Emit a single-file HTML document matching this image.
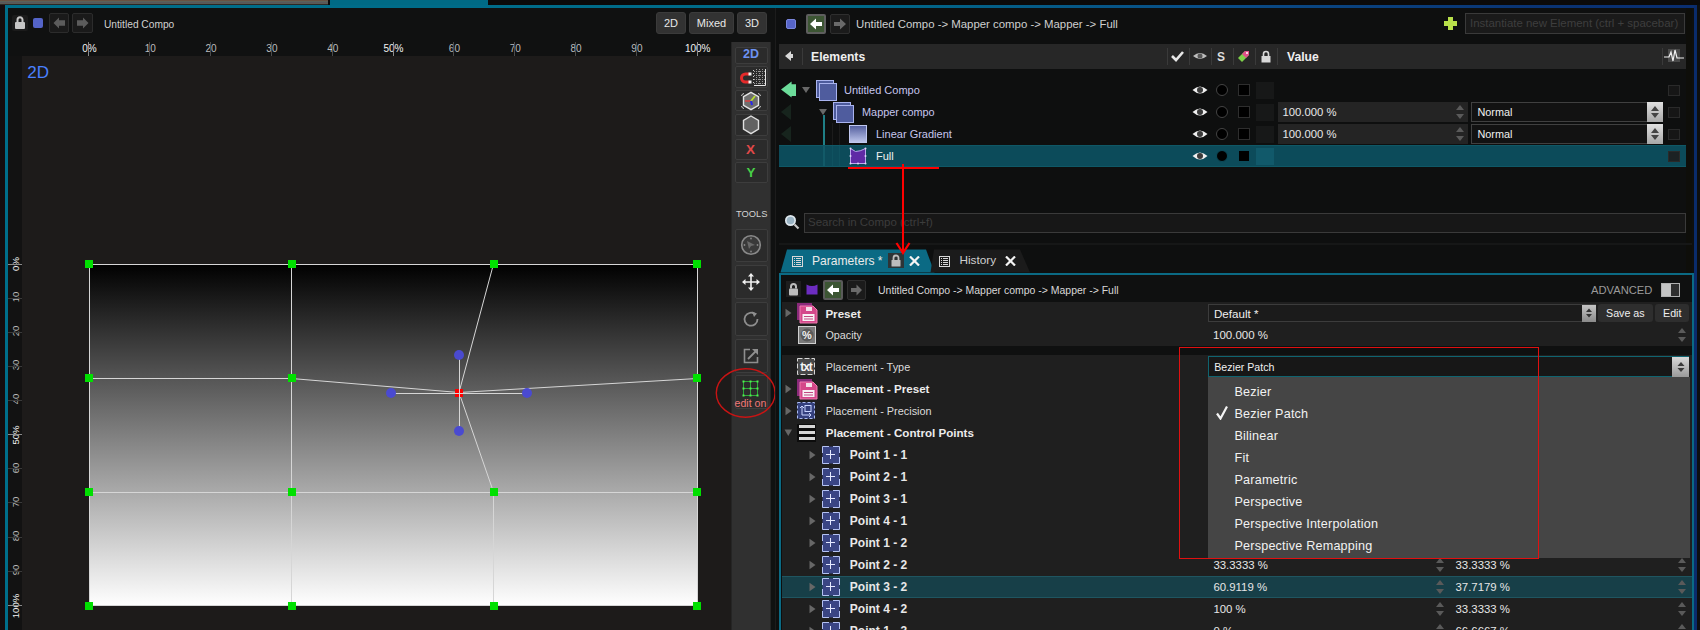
<!DOCTYPE html>
<html><head><meta charset="utf-8">
<style>
*{margin:0;padding:0;box-sizing:border-box}
html,body{width:1700px;height:630px;overflow:hidden;background:#0e0f0f;font-family:"Liberation Sans",sans-serif;color:#d0d0d0}
.a{position:absolute}
.t{position:absolute;white-space:nowrap;line-height:1}
.btn{background:#323232;border:1px solid #3b3b3b;border-radius:3px;color:#e8e8e8;font-size:11px;line-height:20px;text-align:center}
.rl{position:absolute;top:44.4px;font-size:10px;line-height:10px;color:#bdbdbd;transform:translateX(-50%);white-space:nowrap}
.rt{position:absolute;top:42px;width:1px;height:14px;background:#6a6a6a}
.vl{position:absolute;left:16.3px;font-size:9.6px;line-height:10px;color:#bdbdbd;transform:translate(-50%,-50%) rotate(-90deg);white-space:nowrap}
.vt{position:absolute;left:8px;width:14px;height:1px;background:#6a6a6a}
.fld{position:absolute;background:#1e1e1e;border:1px solid #3a3a3a}
.sp{position:absolute;width:8px;height:14px}
.sp:before{content:"";position:absolute;left:0;top:0;border-left:4px solid transparent;border-right:4px solid transparent;border-bottom:5px solid #5a5a5a}
.sp:after{content:"";position:absolute;left:0;bottom:0;border-left:4px solid transparent;border-right:4px solid transparent;border-top:5px solid #5a5a5a}
.ck{position:absolute;width:12px;height:12px;background:#000;border:1px solid #3a3a3a}
.cir{position:absolute;width:12px;height:12px;background:#000;border:1.5px solid #3e3e3e;border-radius:50%}
.tri{position:absolute;width:0;height:0;border-top:4px solid transparent;border-bottom:4px solid transparent;border-left:6px solid #555}
.trd{position:absolute;width:0;height:0;border-left:4px solid transparent;border-right:4px solid transparent;border-top:6px solid #555}
</style></head><body>
<!-- top strip -->
<div class="a" style="left:0;top:0;width:1700px;height:5px;background:#0b0a0a"></div>
<div class="a" style="left:0;top:0;width:328px;height:5px;background:linear-gradient(#6a5242 0,#6a5242 20%,#5c6258 20%,#5c6258 40%,#59565c 40%,#59565c 60%,#5c5c52 60%,#5c5c52 80%,#2e2826 80%)"></div>
<div class="a" style="left:330px;top:0;width:158px;height:8px;background:#006a85"></div>
<div class="a" style="left:5px;top:5px;width:1692px;height:3px;background:linear-gradient(90deg,#006e8a 0%,#006a88 50%,#0a4c86 72%,#0a3474 90%,#0a2e70 100%)"></div>
<div class="a" style="left:0;top:5px;width:5px;height:625px;background:#140d0e"></div>
<div class="a" style="left:5px;top:5px;width:3px;height:625px;background:#006e8a"></div>

<!-- LEFT PANEL -->
<div class="a" id="lp" style="left:8px;top:8px;width:767px;height:622px;background:#101111"></div>
<!-- vertical ruler -->
<div class="a" style="left:8px;top:56px;width:14px;height:574px;background:#121212"></div>
<!-- canvas -->
<div class="a" style="left:22px;top:56px;width:709px;height:574px;background:#1d1b1a"></div>

<!-- left toolbar -->
<div class="a" style="left:12px;top:15px;width:16px;height:16px;background:#1b1b1b;border-radius:2px"></div>
<svg class="a" style="left:12px;top:15px" width="16" height="16"><path d="M5.5,7V4.8A2.5,2.5 0 0 1 10.5,4.8V7" stroke="#c6c6c6" stroke-width="2" fill="none"/><rect x="3" y="7" width="10" height="7" rx="1" fill="#c6c6c6"/></svg>
<div class="a" style="left:33px;top:18px;width:10px;height:10px;background:#5464c8;border-radius:2px"></div>
<div class="a" style="left:49px;top:13px;width:20px;height:20px;background:#1a1a1a;border:1px solid #2c2c2c;border-radius:2px"></div>
<svg class="a" style="left:49px;top:13px" width="20" height="20"><path d="M4.5,10L10,4.5V7.3H16V12.7H10V15.5Z" fill="#5c5c5c"/></svg>
<div class="a" style="left:72px;top:13px;width:21px;height:20px;background:#1a1a1a;border:1px solid #2c2c2c;border-radius:2px"></div>
<svg class="a" style="left:72px;top:13px" width="21" height="20"><path d="M16.5,10L11,4.5V7.3H5V12.7H11V15.5Z" fill="#5c5c5c"/></svg>
<div class="t" style="left:104px;top:20px;font-size:10.2px;color:#d0d0d0">Untitled Compo</div>
<div class="a btn" style="left:656px;top:12px;width:30px;height:22px">2D</div>
<div class="a btn" style="left:689px;top:12px;width:45px;height:22px">Mixed</div>
<div class="a btn" style="left:737px;top:12px;width:30px;height:22px">3D</div>
<!-- ruler labels -->

<div class="rl" style="left:89.4px;color:#f2f2f2">0%</div><div class="rt" style="left:88px;background:#8a8a8a"></div>
<div class="rl" style="left:150.2px;color:#bcbcbc">10</div><div class="rt" style="left:149px;background:#4a4a4a"></div>
<div class="rl" style="left:211.1px;color:#bcbcbc">20</div><div class="rt" style="left:210px;background:#4a4a4a"></div>
<div class="rl" style="left:271.9px;color:#bcbcbc">30</div><div class="rt" style="left:271px;background:#4a4a4a"></div>
<div class="rl" style="left:332.7px;color:#bcbcbc">40</div><div class="rt" style="left:332px;background:#4a4a4a"></div>
<div class="rl" style="left:393.5px;color:#f2f2f2">50%</div><div class="rt" style="left:393px;background:#8a8a8a"></div>
<div class="rl" style="left:454.4px;color:#bcbcbc">60</div><div class="rt" style="left:453px;background:#4a4a4a"></div>
<div class="rl" style="left:515.2px;color:#bcbcbc">70</div><div class="rt" style="left:514px;background:#4a4a4a"></div>
<div class="rl" style="left:576.0px;color:#bcbcbc">80</div><div class="rt" style="left:575px;background:#4a4a4a"></div>
<div class="rl" style="left:636.9px;color:#bcbcbc">90</div><div class="rt" style="left:636px;background:#4a4a4a"></div>
<div class="rl" style="left:697.7px;color:#f2f2f2">100%</div><div class="rt" style="left:697px;background:#8a8a8a"></div>
<div class="vl" style="top:263.5px;color:#f2f2f2">0%</div><div class="vt" style="top:264px;background:#8a8a8a"></div>
<div class="vl" style="top:297.0px;color:#bcbcbc">10</div><div class="vt" style="top:298px;background:#3a3a3a"></div>
<div class="vl" style="top:331.1px;color:#bcbcbc">20</div><div class="vt" style="top:332px;background:#3a3a3a"></div>
<div class="vl" style="top:365.2px;color:#bcbcbc">30</div><div class="vt" style="top:366px;background:#3a3a3a"></div>
<div class="vl" style="top:399.3px;color:#bcbcbc">40</div><div class="vt" style="top:400px;background:#3a3a3a"></div>
<div class="vl" style="top:435.2px;color:#f2f2f2">50%</div><div class="vt" style="top:434px;background:#8a8a8a"></div>
<div class="vl" style="top:467.5px;color:#bcbcbc">60</div><div class="vt" style="top:468px;background:#3a3a3a"></div>
<div class="vl" style="top:501.6px;color:#bcbcbc">70</div><div class="vt" style="top:502px;background:#3a3a3a"></div>
<div class="vl" style="top:535.7px;color:#bcbcbc">80</div><div class="vt" style="top:537px;background:#3a3a3a"></div>
<div class="vl" style="top:569.8px;color:#bcbcbc">90</div><div class="vt" style="top:571px;background:#3a3a3a"></div>
<div class="vl" style="top:605.5px;color:#f2f2f2">100%</div><div class="vt" style="top:605px;background:#8a8a8a"></div>
<!-- toolbar column -->
<div class="a" style="left:731px;top:42px;width:40px;height:588px;background:#303030;border-left:1px solid #252525;border-right:1px solid #252525"></div>
<div class="a" style="left:735px;top:47px;width:33px;height:17px;background:#2b2b2b;border:1px solid #3d3d3d;border-radius:2px"></div>
<div class="t" style="left:743px;top:47.5px;font-size:12.5px;font-weight:bold;color:#6d92f2">2D</div>
<div class="a" style="left:735px;top:66px;width:33px;height:22px;background:#2b2b2b;border:1px solid #3d3d3d;border-radius:2px"></div>
<svg class="a" style="left:737px;top:68px" width="30" height="19"><path d="M12.5,6H8.5A4,4 0 0 0 8.5,14H12.5" stroke="#e42a2a" stroke-width="3" fill="none"/><rect x="11.5" y="4.5" width="3" height="3" fill="#f4f4f4"/><rect x="11.5" y="12.5" width="3" height="3" fill="#f4f4f4"/><g fill="#cfcfcf"><rect x="16" y="2" width="1" height="1"/><rect x="16" y="5" width="1" height="1"/><rect x="16" y="8" width="1" height="1"/><rect x="16" y="11" width="1" height="1"/><rect x="16" y="14" width="1" height="1"/></g><g stroke="#bdbdbd" stroke-width="1" fill="none"><path d="M19.5,1V17M22.5,1V17M25.5,1V17M17,3.5H28M17,7.5H28M17,11.5H28M17,15.5H28" stroke-dasharray="1 1" stroke="#9a9a9a"/><path d="M28.5,1V17.5H17" stroke="#e8e8e8"/></g></svg>
<div class="a" style="left:735px;top:90px;width:33px;height:21px;background:#2b2b2b;border:1px solid #3d3d3d;border-radius:2px"></div>
<svg class="a" style="left:739px;top:90px" width="24" height="22"><path d="M12,2.3L19.5,6.6V15.4L12,19.7L4.5,15.4V6.6Z" fill="#6e6e6e" stroke="#e4e4e4" stroke-width="1.4"/><path d="M6,11H12" stroke="#c84848" stroke-width="1.8"/><path d="M12,11L16,6" stroke="#b8e030" stroke-width="1.8"/><path d="M12,11L13,15" stroke="#2828e8" stroke-width="2"/><g stroke="#cfcfcf" stroke-width="1" fill="none"><path d="M2.5,6A3,3 0 0 1 5,3.5M21.5,6A3,3 0 0 0 19,3.5M2.5,16A3,3 0 0 0 5,18.5M21.5,16A3,3 0 0 1 19,18.5"/></g></svg>
<div class="a" style="left:735px;top:114px;width:33px;height:22px;background:#2b2b2b;border:1px solid #3d3d3d;border-radius:2px"></div>
<svg class="a" style="left:741px;top:115px" width="20" height="20"><path d="M10,1L17.5,5.3V14.2L10,18.6L2.5,14.2V5.3Z" fill="#626262" stroke="#e0e0e0" stroke-width="1.4"/></svg>
<div class="a" style="left:735px;top:139px;width:33px;height:21px;background:#2b2b2b;border:1px solid #3d3d3d;border-radius:2px"></div>
<div class="t" style="left:746px;top:142.5px;font-size:13.5px;font-weight:bold;color:#e04848">X</div>
<div class="a" style="left:735px;top:162px;width:33px;height:21px;background:#2b2b2b;border:1px solid #3d3d3d;border-radius:2px"></div>
<div class="t" style="left:746.5px;top:166px;font-size:13.5px;font-weight:bold;color:#48d048">Y</div>
<div class="t" style="left:736px;top:210.3px;font-size:9.3px;color:#d4d4d4">TOOLS</div>
<div class="a" style="left:735px;top:229px;width:33px;height:33px;background:#2b2b2b;border:1px solid #3d3d3d;border-radius:2px"></div>
<svg class="a" style="left:740px;top:234px" width="22" height="22"><circle cx="11" cy="11" r="9.3" fill="#3a3a3a" stroke="#8a8a8a" stroke-width="1.6"/><path d="M7,7L15,11L11,12L9,15Z" fill="#6a6a6a"/><circle cx="11" cy="4.5" r="0.9" fill="#888"/><circle cx="11" cy="17.5" r="0.9" fill="#888"/><circle cx="4.5" cy="11" r="0.9" fill="#888"/><circle cx="17.5" cy="11" r="0.9" fill="#888"/></svg>
<div class="a" style="left:735px;top:265px;width:33px;height:34px;background:#2b2b2b;border:1px solid #3d3d3d;border-radius:2px"></div>
<svg class="a" style="left:741px;top:272px" width="20" height="20"><path d="M10,2V18M2,10H18" stroke="#f0f0f0" stroke-width="1.6"/><path d="M10,1L7,4.5H13ZM10,19L7,15.5H13ZM1,10L4.5,7V13ZM19,10L15.5,7V13Z" fill="#f0f0f0"/></svg>
<div class="a" style="left:735px;top:302px;width:33px;height:34px;background:#2b2b2b;border:1px solid #3d3d3d;border-radius:2px"></div>
<svg class="a" style="left:741px;top:309px" width="20" height="20"><path d="M14.5,5.5A6.5,6.5 0 1 0 16.5,10" stroke="#8e8e8e" stroke-width="1.8" fill="none"/><path d="M11,2.5L16,4.5L13,8Z" fill="#8e8e8e"/></svg>
<div class="a" style="left:735px;top:339px;width:33px;height:34px;background:#2b2b2b;border:1px solid #3d3d3d;border-radius:2px"></div>
<svg class="a" style="left:742px;top:347px" width="18" height="18"><path d="M8,2.5H2.5V15.5H15.5V10" stroke="#8e8e8e" stroke-width="1.6" fill="none"/><path d="M6,12L15,3" stroke="#8e8e8e" stroke-width="1.8"/><path d="M10,2H16V8Z" fill="#8e8e8e"/></svg>
<div class="a" style="left:735px;top:375px;width:33px;height:34px;background:#2b2b2b;border:1px solid #3d3d3d;border-radius:2px"></div>
<svg class="a" style="left:741px;top:379px" width="20" height="18"><g stroke="#2fa83a" stroke-width="1" fill="none"><path d="M2.5,2.5H16.5V16.5H2.5ZM9.5,2.5V16.5M2.5,9.5H16.5"/></g><g fill="#50f050"><rect x="1.5" y="1.5" width="2" height="2"/><rect x="8.5" y="1.5" width="2" height="2"/><rect x="15.5" y="1.5" width="2" height="2"/><rect x="1.5" y="8.5" width="2" height="2"/><rect x="8.5" y="8.5" width="2" height="2"/><rect x="15.5" y="8.5" width="2" height="2"/><rect x="1.5" y="15.5" width="2" height="2"/><rect x="8.5" y="15.5" width="2" height="2"/><rect x="15.5" y="15.5" width="2" height="2"/></g></svg>
<div class="t" style="left:734.5px;top:397.5px;font-size:10.6px;color:#f07878">edit on</div>
<svg class="a" style="left:712px;top:364px" width="66" height="58"><ellipse cx="33.7" cy="29" rx="29.4" ry="24.2" fill="none" stroke="#c81414" stroke-width="1.4"/></svg>
<div class="t" style="left:27.3px;top:63.6px;font-size:17px;color:#4a80ff">2D</div>


<svg class="a" style="left:0;top:0" width="1700" height="630" viewBox="0 0 1700 630">
<defs><linearGradient id="g1" x1="0" y1="0" x2="0" y2="1"><stop offset="0" stop-color="#000"/><stop offset="1" stop-color="#fff"/></linearGradient></defs>
<rect x="89" y="264" width="609" height="342" fill="url(#g1)"/>
<g stroke="#d6d6d6" stroke-width="1" fill="none">
<path d="M89,264.5H697.5M89,378.5L291.5,378.5L459,392.5L697.5,378.5M89,492.5H697.5M89,605.5H697.5"/>
<path d="M89.5,264V606M291.5,264V606M493.5,264L459,392.5L493.5,492V606M697.5,264V606"/>
<path d="M459.5,355V431M391,393.5H527"/>
</g>
<g fill="#00e000">
<rect x="85" y="260" width="8" height="8"/><rect x="288" y="260" width="8" height="8"/><rect x="490" y="260" width="8" height="8"/><rect x="693" y="260" width="8" height="8"/>
<rect x="85" y="374" width="8" height="8"/><rect x="288" y="374" width="8" height="8"/><rect x="693" y="374" width="8" height="8"/>
<rect x="85" y="488" width="8" height="8"/><rect x="288" y="488" width="8" height="8"/><rect x="490" y="488" width="8" height="8"/><rect x="693" y="488" width="8" height="8"/>
<rect x="85" y="602" width="8" height="8"/><rect x="288" y="602" width="8" height="8"/><rect x="490" y="602" width="8" height="8"/><rect x="693" y="602" width="8" height="8"/>
</g>
<g fill="#4a4ad0"><circle cx="459" cy="355" r="5"/><circle cx="459" cy="431" r="5"/><circle cx="391" cy="393" r="5"/><circle cx="527" cy="393" r="5"/></g>
<rect x="455" y="389" width="8" height="8" fill="#ff0000"/>
<path d="M459.5,389V397M455,393.5H463" stroke="#d6d6d6" stroke-width="1"/>
</svg>

<!-- RIGHT PANEL -->
<div class="a" id="rp" style="left:775px;top:8px;width:919px;height:622px;background:#0e0f0f;border-left:1px solid #1c1c1c"></div>
<div class="a" style="left:1694px;top:5px;width:3px;height:625px;background:#0a2c6c"></div><div class="a" style="left:1686px;top:8px;width:6px;height:265px;background:#0e0e0a"></div>


<!-- right header -->
<div class="a" style="left:786px;top:19px;width:10px;height:10px;background:#5664c8;border:1px solid #7a86dc;border-radius:2px"></div>
<div class="a" style="left:806px;top:14px;width:20px;height:20px;background:#3c5533;border:2px solid #5e5e5e;border-radius:2px"></div>
<svg class="a" style="left:806px;top:14px" width="20" height="20"><path d="M4,10L10,4.5V8H16V12H10V15.5Z" fill="#ffffff"/></svg>
<div class="a" style="left:830px;top:14px;width:20px;height:20px;background:#1b1b1b;border:1px solid #2e2e2e;border-radius:2px"></div>
<svg class="a" style="left:830px;top:14px" width="20" height="20"><path d="M16,10L10,4.5V8H4V12H10V15.5Z" fill="#6a6a6a"/></svg>
<div class="t" style="left:856px;top:19px;font-size:11.4px;color:#cfcfcf">Untitled Compo -&gt; Mapper compo -&gt; Mapper -&gt; Full</div>
<svg class="a" style="left:1443px;top:16px" width="15" height="15"><path d="M5,1H10V5H14V10H10V14H5V10H1V5H5Z" fill="#b8e04a"/></svg>
<div class="a" style="left:1465px;top:13px;width:220px;height:21px;background:#1a1a1a;border:1px solid #3a3a3a"></div>
<div class="t" style="left:1470px;top:18px;font-size:11.45px;color:#3e3e3e">Instantiate new Element (ctrl + spacebar)</div>

<!-- elements header -->
<div class="a" style="left:779px;top:44px;width:907px;height:25px;background:#272727"></div>
<svg class="a" style="left:783px;top:49px" width="12" height="14"><path d="M2,7L8,2V12Z" fill="#d8d8d8"/><rect x="7" y="5" width="3" height="4" fill="#d8d8d8"/></svg>
<div class="a" style="left:802px;top:48px;width:1px;height:17px;background:#3a3a3a"></div>
<div class="t" style="left:811px;top:50.5px;font-size:12.2px;font-weight:bold;color:#f0f0f0">Elements</div>
<div class="a" style="left:1167px;top:48px;width:1px;height:17px;background:#3a3a3a"></div>
<div class="a" style="left:1189px;top:48px;width:1px;height:17px;background:#3a3a3a"></div>
<div class="a" style="left:1211px;top:48px;width:1px;height:17px;background:#3a3a3a"></div>
<div class="a" style="left:1233px;top:48px;width:1px;height:17px;background:#3a3a3a"></div>
<div class="a" style="left:1255px;top:48px;width:1px;height:17px;background:#3a3a3a"></div>
<div class="a" style="left:1277px;top:48px;width:1px;height:17px;background:#3a3a3a"></div>
<svg class="a" style="left:1170px;top:49px" width="16" height="14"><path d="M2,7L6,11L13,3" stroke="#e8e8e8" stroke-width="2.6" fill="none"/></svg>
<svg class="a" style="left:1192px;top:50px" width="16" height="12"><path d="M1,6Q8,0 15,6Q8,12 1,6Z" fill="#bdbdbd"/><circle cx="8" cy="6" r="2.5" fill="#555"/></svg>
<div class="t" style="left:1217px;top:50.5px;font-size:12px;font-weight:bold;color:#dcdcdc">S</div>
<svg class="a" style="left:1236px;top:49px" width="15" height="15"><path d="M2,9L9,2H13V6L6,13Z" fill="#7ed04a"/><path d="M6,5L9,2H13V6L10,9Z" fill="#e0508a"/><circle cx="11" cy="4" r="1" fill="#fff"/></svg>
<svg class="a" style="left:1259px;top:49px" width="14" height="15"><path d="M4.5,7V5A2.5,2.5 0 0 1 9.5,5V7" stroke="#d8d8d8" stroke-width="1.6" fill="none"/><rect x="2.5" y="7" width="9" height="6.5" fill="#d8d8d8"/></svg>
<div class="t" style="left:1287px;top:50.5px;font-size:12.2px;font-weight:bold;color:#f0f0f0">Value</div>
<div class="a" style="left:1662px;top:48px;width:1px;height:17px;background:#3a3a3a"></div>
<svg class="a" style="left:1663px;top:48px" width="22" height="15"><rect x="5" y="1" width="12" height="13" fill="#4a4a4a"/><path d="M1,9H6L8,4L10,13L12,2L14,10H21" stroke="#f0f0f0" stroke-width="1.2" fill="none"/></svg>


<!-- tree -->
<div class="a" style="left:779px;top:145px;width:907px;height:22px;background:#0c4b5a;border-top:1px solid #0f5866;border-bottom:1px solid #0f5866"></div>
<svg class="a" style="left:780px;top:81px" width="18" height="18"><path d="M1,8.4L11.6,0.6V3.3H16V14.9H11.6V16.6Z" fill="#6cdc9a"/></svg>
<svg class="a" style="left:780px;top:103px" width="12" height="18"><path d="M1,9L11,1V17Z" fill="#17241d"/></svg>
<svg class="a" style="left:780px;top:125px" width="12" height="18"><path d="M1,9L11,1V17Z" fill="#17241d"/></svg>
<div class="trd" style="left:802px;top:87px;border-left-width:4.5px;border-right-width:4.5px;border-top-color:#686868"></div>
<div class="trd" style="left:819px;top:109px;border-left-width:4.5px;border-right-width:4.5px;border-top-color:#686868"></div>
<div class="a" style="left:823px;top:115px;width:2px;height:30px;background:#1f7f86"></div>
<div class="a" style="left:832px;top:123px;width:1px;height:22px;background:#1c1c1c"></div>
<div class="a" style="left:839px;top:123px;width:1px;height:22px;background:#1c1c1c"></div><div class="a" style="left:823px;top:146px;width:2px;height:20px;background:#125a68"></div><div class="a" style="left:832px;top:146px;width:1px;height:20px;background:#0f5260"></div><div class="a" style="left:839px;top:146px;width:1px;height:20px;background:#0f5260"></div>
<div class="a" style="left:816px;top:80px;width:18px;height:18px;background:#4d5b9c;border:1px solid #a9b3ee"></div>
<div class="a" style="left:819px;top:83px;width:18px;height:18px;background:#4f5c9e;border:1px solid #a9b3ee"></div>
<div class="t" style="left:844px;top:84.5px;font-size:11px;color:#c6c6ee">Untitled Compo</div>
<div class="a" style="left:833px;top:102px;width:18px;height:18px;background:#4d5b9c;border:1px solid #a9b3ee"></div>
<div class="a" style="left:836px;top:105px;width:18px;height:18px;background:#4f5c9e;border:1px solid #a9b3ee"></div>
<div class="t" style="left:862px;top:107px;font-size:10.9px;color:#c6c6ee">Mapper compo</div>
<div class="a" style="left:849px;top:125px;width:18px;height:18px;background:linear-gradient(#55609f,#bcc4ea);border:1px solid #c0c8f0"></div>
<div class="t" style="left:876px;top:128.7px;font-size:11px;color:#c6c6ee">Linear Gradient</div>
<svg class="a" style="left:849px;top:147px" width="19" height="19"><path d="M1.5,1.5L6.5,4.5Q11,4.5 16.5,1.5V16.5H1.5Z" fill="#5f2aa6" stroke="#bba4ee" stroke-width="1"/><g fill="#e0d8f8"><circle cx="1.5" cy="1.5" r="1"/><circle cx="16.5" cy="1.5" r="1"/><circle cx="1.5" cy="16.5" r="1"/><circle cx="16.5" cy="16.5" r="1"/><circle cx="9" cy="16.5" r="1"/><circle cx="1.5" cy="9" r="1"/><circle cx="16.5" cy="9" r="1"/></g></svg>
<div class="t" style="left:876px;top:150.7px;font-size:11px;color:#f0f0f0">Full</div>
<svg class="a" style="left:1192px;top:85px" width="16" height="10"><path d="M0.5,5Q8,-2 15.5,5Q8,12 0.5,5Z" fill="#f0f0f0"/><circle cx="8" cy="5" r="3" fill="#3a3a3a"/></svg><div class="cir" style="left:1216px;top:84px;border-color:#444"></div><div class="ck" style="left:1238px;top:84px;border-color:#2e2e2e"></div><div class="a" style="left:1256px;top:82px;width:18px;height:17px;background:#171818"></div><div class="a" style="left:1668px;top:85px;width:12px;height:11px;background:#161616;border:1px solid #2a2a2a"></div><svg class="a" style="left:1192px;top:107px" width="16" height="10"><path d="M0.5,5Q8,-2 15.5,5Q8,12 0.5,5Z" fill="#f0f0f0"/><circle cx="8" cy="5" r="3" fill="#3a3a3a"/></svg><div class="cir" style="left:1216px;top:106px;border-color:#444"></div><div class="ck" style="left:1238px;top:106px;border-color:#2e2e2e"></div><div class="a" style="left:1256px;top:104px;width:18px;height:17px;background:#171818"></div><div class="a" style="left:1668px;top:107px;width:12px;height:11px;background:#161616;border:1px solid #2a2a2a"></div><svg class="a" style="left:1192px;top:129px" width="16" height="10"><path d="M0.5,5Q8,-2 15.5,5Q8,12 0.5,5Z" fill="#f0f0f0"/><circle cx="8" cy="5" r="3" fill="#3a3a3a"/></svg><div class="cir" style="left:1216px;top:128px;border-color:#444"></div><div class="ck" style="left:1238px;top:128px;border-color:#2e2e2e"></div><div class="a" style="left:1256px;top:126px;width:18px;height:17px;background:#171818"></div><div class="a" style="left:1668px;top:129px;width:12px;height:11px;background:#161616;border:1px solid #2a2a2a"></div><svg class="a" style="left:1192px;top:151px" width="16" height="10"><path d="M0.5,5Q8,-2 15.5,5Q8,12 0.5,5Z" fill="#f0f0f0"/><circle cx="8" cy="5" r="3" fill="#3a3a3a"/></svg><div class="cir" style="left:1216px;top:150px;border-color:#0c4b5a"></div><div class="ck" style="left:1238px;top:150px;border-color:#0c4b5a"></div><div class="a" style="left:1256px;top:148px;width:18px;height:17px;background:#11596a"></div><div class="a" style="left:1668px;top:151px;width:12px;height:11px;background:#1c2224;border:1px solid #2a2a2a"></div>
<div class="fld" style="left:1278px;top:102px;width:190px;height:20px;background:#242424;border-color:#242424"></div>
<div class="t" style="left:1282.5px;top:106.7px;font-size:11.3px;color:#e8e8e8">100.000 %</div>
<div class="sp" style="left:1456px;top:105px"></div>
<div class="fld" style="left:1278px;top:124px;width:190px;height:20px;background:#242424;border-color:#242424"></div>
<div class="t" style="left:1282.5px;top:128.7px;font-size:11.3px;color:#e8e8e8">100.000 %</div>
<div class="sp" style="left:1456px;top:127px"></div>
<div class="fld" style="left:1471px;top:102px;width:192px;height:20px;background:#121212;border-color:#404040"></div>
<div class="a" style="left:1647px;top:102px;width:16px;height:20px;background:linear-gradient(#e0e0e0,#a8a8a8)"></div>
<div class="t" style="left:1477.5px;top:106.7px;font-size:10.85px;color:#f0f0f0">Normal</div>
<div class="fld" style="left:1471px;top:124px;width:192px;height:20px;background:#121212;border-color:#404040"></div>
<div class="a" style="left:1647px;top:124px;width:16px;height:20px;background:linear-gradient(#e0e0e0,#a8a8a8)"></div>
<div class="t" style="left:1477.5px;top:128.7px;font-size:10.85px;color:#f0f0f0">Normal</div>
<svg class="a" style="left:1650px;top:105px" width="10" height="14"><path d="M1,6L5,1L9,6Z M1,8L5,13L9,8Z" fill="#444"/></svg>
<svg class="a" style="left:1650px;top:127px" width="10" height="14"><path d="M1,6L5,1L9,6Z M1,8L5,13L9,8Z" fill="#444"/></svg>


<!-- search -->
<svg class="a" style="left:784px;top:214px" width="16" height="16"><circle cx="6.5" cy="6.5" r="5.5" fill="#dfe8ee"/><circle cx="6.5" cy="6.5" r="3.8" fill="#9ab4c4"/><path d="M10.5,10.5L14.5,14.5" stroke="#c8c8c8" stroke-width="2.2"/></svg>
<div class="a" style="left:804px;top:213px;width:882px;height:20px;background:#171717;border:1px solid #3a3a3a"></div>
<div class="t" style="left:808px;top:217px;font-size:11.5px;color:#3c3c3c">Search in Compo (ctrl+f)</div>
<!-- tabs -->
<div class="a" style="left:779px;top:243px;width:913px;height:2px;background:#161717"></div>
<svg class="a" style="left:778px;top:248px" width="260" height="28"><path d="M2.5,24.5L9,1.5H148L156.5,24.5Z" fill="#0b6a84"/><path d="M152.5,24.5L156,1.5H242L252,24.5Z" fill="#1b1b1b"/></svg>
<svg class="a" style="left:792px;top:256px" width="11" height="11"><rect x="0.5" y="0.5" width="10" height="10" fill="none" stroke="#d8d8d8" stroke-width="1"/><path d="M2,2.5H3M4,2.5H9M2,4.5H3M4,4.5H9M2,6.5H3M4,6.5H9M2,8.5H3M4,8.5H9" stroke="#d8d8d8" stroke-width="1"/></svg>
<div class="t" style="left:812px;top:255.3px;font-size:12.1px;color:#eaeaea">Parameters *</div>
<div class="a" style="left:888px;top:253px;width:16px;height:15px;background:#2e3436"></div>
<svg class="a" style="left:888px;top:253px" width="16" height="15"><path d="M5.5,7V5A2.5,2.5 0 0 1 10.5,5V7" stroke="#bdbdbd" stroke-width="1.8" fill="none"/><rect x="3.5" y="7" width="9" height="6.5" rx="0.5" fill="#bdbdbd"/></svg>
<svg class="a" style="left:909px;top:256px" width="11" height="10"><path d="M1,0.5L10,9.5M10,0.5L1,9.5" stroke="#f4f4f4" stroke-width="2.2"/></svg><svg class="a" style="left:939px;top:256px" width="11" height="11"><rect x="0.5" y="0.5" width="10" height="10" fill="none" stroke="#d8d8d8" stroke-width="1"/><path d="M2,2.5H3M4,2.5H9M2,4.5H3M4,4.5H9M2,6.5H3M4,6.5H9M2,8.5H3M4,8.5H9" stroke="#d8d8d8" stroke-width="1"/></svg>
<div class="t" style="left:959.4px;top:255.3px;font-size:11.8px;color:#cfcfcf">History</div>
<svg class="a" style="left:1005px;top:256px" width="11" height="10"><path d="M1,0.5L10,9.5M10,0.5L1,9.5" stroke="#f4f4f4" stroke-width="2.2"/></svg>
<!-- params panel border -->
<div class="a" style="left:779px;top:273px;width:915px;height:357px;border:2px solid #0b6a84;border-bottom:none"></div><div class="a" style="left:781px;top:275px;width:1px;height:355px;background:#0d0e0e"></div>
<div class="a" style="left:782px;top:275px;width:910px;height:27px;background:#0f1010"></div>
<div class="a" style="left:786px;top:281px;width:15px;height:16px;background:#1e1e1e"></div>
<svg class="a" style="left:786px;top:281px" width="15" height="16"><path d="M5,7.5V5.5A2.5,2.5 0 0 1 10,5.5V7.5" stroke="#bcbcbc" stroke-width="2" fill="none"/><rect x="3" y="7.5" width="9" height="7" rx="1" fill="#bcbcbc"/></svg>
<svg class="a" style="left:806px;top:284px" width="12" height="11"><path d="M0.5,0.5Q6,3.5 11.5,0.5V10.5H0.5Z" fill="#6c2cc0"/></svg>
<div class="a" style="left:823px;top:280px;width:20px;height:20px;background:#3c5533;border:2px solid #5a5a5a;border-radius:2px"></div>
<svg class="a" style="left:823px;top:280px" width="20" height="20"><path d="M4,10L10,4.5V8H16V12H10V15.5Z" fill="#ffffff"/></svg>
<div class="a" style="left:847px;top:280px;width:19px;height:20px;background:#1b1b1b;border:1px solid #2e2e2e;border-radius:2px"></div>
<svg class="a" style="left:847px;top:280px" width="19" height="20"><path d="M15,10L9.5,4.5V8H4V12H9.5V15.5Z" fill="#6a6a6a"/></svg>
<div class="t" style="left:878px;top:285.8px;font-size:10.47px;color:#d8d8d8">Untitled Compo -&gt; Mapper compo -&gt; Mapper -&gt; Full</div>
<div class="t" style="left:1591px;top:284.7px;font-size:11.2px;color:#9a9a9a">ADVANCED</div>
<div class="a" style="left:1661px;top:283px;width:19px;height:14px;background:#2e2e2e;border:1px solid #b0b0b0"></div>
<div class="a" style="left:1662px;top:284px;width:9px;height:12px;background:#c4c4c4"></div>
<!-- param rows bg -->
<div class="a" style="left:782px;top:302px;width:910px;height:44px;background:#1f1f1f"></div>
<div class="a" style="left:782px;top:346px;width:910px;height:9px;background:#0f1010"></div>
<div class="a" style="left:782px;top:355px;width:910px;height:275px;background:#1f1f1f"></div>


<!-- preset/opacity -->
<svg class="a" style="left:785px;top:308px" width="8" height="10"><path d="M0.5,0.8L6.5,5L0.5,9.2Z" fill="#676767"/></svg><svg class="a" style="left:797px;top:303px" width="21" height="21"><rect x="0" y="0" width="15" height="17" fill="#8a2a7a"/><path d="M3,3H16L20,7V20H3Z" fill="#d4488a" stroke="#f07ab0" stroke-width="1"/><rect x="9" y="4" width="6" height="4" fill="#f4e0ea"/><rect x="5.5" y="11" width="12" height="7" fill="#f8f0f4"/><path d="M7,13.5H16M7,16H16" stroke="#c04a80" stroke-width="1"/></svg>
<div class="t" style="left:825.4px;top:307.8px;font-size:11.6px;font-weight:bold;color:#ececec">Preset</div>
<svg class="a" style="left:798px;top:326px" width="18" height="18"><rect x="0.5" y="0.5" width="17" height="17" fill="#7a7a7a" stroke="#cfcfcf" stroke-width="1"/><circle cx="9" cy="9" r="6.5" fill="#5a5a5a"/><text x="9" y="13" font-family="Liberation Sans" font-size="11" font-weight="bold" fill="#f0f0f0" text-anchor="middle">%</text></svg>
<div class="t" style="left:825.4px;top:329.7px;font-size:10.8px;color:#dcdcdc">Opacity</div>
<div class="fld" style="left:1208px;top:304px;width:388px;height:18px;background:#1b1b1b;border-color:#3c3c3c"></div>
<div class="t" style="left:1214px;top:307.5px;font-size:11.6px;color:#eeeeee">Default *</div>
<div class="a" style="left:1582px;top:305px;width:14px;height:17px;background:linear-gradient(#c4c4c4,#8a8a8a)"></div>
<svg class="a" style="left:1584px;top:306px" width="10" height="14"><path d="M2,6L5,2.5L8,6Z M2,8L5,11.5L8,8Z" fill="#333"/></svg>
<div class="a" style="left:1598px;top:304px;width:55px;height:18px;background:#2e2e2e;border-radius:3px"></div>
<div class="t" style="left:1606px;top:307.5px;font-size:10.7px;color:#eeeeee">Save as</div>
<div class="a" style="left:1655px;top:304px;width:34px;height:18px;background:#2e2e2e;border-radius:3px"></div>
<div class="t" style="left:1663px;top:307.5px;font-size:10.7px;color:#eeeeee">Edit</div>
<div class="t" style="left:1213px;top:329.6px;font-size:11.5px;color:#e6e6e6">100.000 %</div>
<div class="sp" style="left:1678px;top:328px"></div>
<!-- placement rows -->
<svg class="a" style="left:797px;top:358px" width="18" height="17"><rect x="0.5" y="0.5" width="17" height="16" fill="#484848" stroke="#d8d8d8" stroke-width="1" stroke-dasharray="5 2"/><text x="9" y="12.5" font-family="Liberation Sans" font-size="12" font-weight="bold" fill="#f4f4f4" text-anchor="middle" letter-spacing="-1">txt</text></svg>
<div class="t" style="left:825.7px;top:361.7px;font-size:10.9px;color:#dcdcdc">Placement - Type</div>
<svg class="a" style="left:785px;top:384px" width="8" height="10"><path d="M0.5,0.8L6.5,5L0.5,9.2Z" fill="#676767"/></svg><svg class="a" style="left:797px;top:379px" width="21" height="21"><rect x="0" y="0" width="15" height="17" fill="#8a2a7a"/><path d="M3,3H16L20,7V20H3Z" fill="#d4488a" stroke="#f07ab0" stroke-width="1"/><rect x="9" y="4" width="6" height="4" fill="#f4e0ea"/><rect x="5.5" y="11" width="12" height="7" fill="#f8f0f4"/><path d="M7,13.5H16M7,16H16" stroke="#c04a80" stroke-width="1"/></svg>
<div class="t" style="left:825.7px;top:383.7px;font-size:11.6px;font-weight:bold;color:#ececec;margin-top:-1px">Placement - Preset</div>
<svg class="a" style="left:785px;top:406px" width="8" height="10"><path d="M0.5,0.8L6.5,5L0.5,9.2Z" fill="#676767"/></svg>
<svg class="a" style="left:797px;top:402px" width="18" height="17"><rect x="0.5" y="0.5" width="17" height="16" fill="#34407e" stroke="#a9baf2" stroke-width="1" stroke-dasharray="3 2"/><rect x="8" y="3.5" width="6" height="6" fill="none" stroke="#c8d4ff" stroke-width="1"/><path d="M5,4V13H14M3,6L5,4L7,6M12,11L14,13L12,15" stroke="#c8d4ff" stroke-width="1" fill="none"/></svg>
<div class="t" style="left:825.7px;top:405.7px;font-size:10.9px;color:#dcdcdc">Placement - Precision</div>
<svg class="a" style="left:784px;top:429px" width="9" height="8"><path d="M0.5,0.5H8L4.25,7Z" fill="#676767"/></svg>
<div class="a" style="left:797px;top:424px;width:19px;height:18px;background:#0c0c0c"></div>
<div class="a" style="left:799px;top:425px;width:16px;height:3px;background:#d6d6d6"></div>
<div class="a" style="left:799px;top:431px;width:16px;height:3px;background:#d6d6d6"></div>
<div class="a" style="left:799px;top:437px;width:16px;height:3px;background:#d6d6d6"></div>
<div class="t" style="left:825.7px;top:427.7px;font-size:11.6px;font-weight:bold;color:#ececec;margin-top:-1px">Placement - Control Points</div>
<div class="a" style="left:782px;top:576px;width:910px;height:22px;background:#173f48;border-top:1px solid #1f5560;border-bottom:1px solid #1f5560"></div>
<svg class="a" style="left:809px;top:450px" width="8" height="10"><path d="M0.5,0.8L6.5,5L0.5,9.2Z" fill="#676767"/></svg><svg class="a" style="left:822px;top:446px" width="18" height="18"><rect x="0.5" y="0.5" width="17" height="17" fill="#3a4584" stroke="#b4c2f4" stroke-width="1" stroke-dasharray="6.5 4 6.5 0"/><path d="M8.5,4V13M4,8.5H13" stroke="#e4e9ff" stroke-width="1"/></svg><div class="t" style="left:849.8px;top:449.6px;font-size:12px;font-weight:bold;color:#e8e8e8;margin-top:-0.6px">Point 1 - 1</div>
<svg class="a" style="left:809px;top:472px" width="8" height="10"><path d="M0.5,0.8L6.5,5L0.5,9.2Z" fill="#676767"/></svg><svg class="a" style="left:822px;top:468px" width="18" height="18"><rect x="0.5" y="0.5" width="17" height="17" fill="#3a4584" stroke="#b4c2f4" stroke-width="1" stroke-dasharray="6.5 4 6.5 0"/><path d="M8.5,4V13M4,8.5H13" stroke="#e4e9ff" stroke-width="1"/></svg><div class="t" style="left:849.8px;top:471.6px;font-size:12px;font-weight:bold;color:#e8e8e8;margin-top:-0.6px">Point 2 - 1</div>
<svg class="a" style="left:809px;top:494px" width="8" height="10"><path d="M0.5,0.8L6.5,5L0.5,9.2Z" fill="#676767"/></svg><svg class="a" style="left:822px;top:490px" width="18" height="18"><rect x="0.5" y="0.5" width="17" height="17" fill="#3a4584" stroke="#b4c2f4" stroke-width="1" stroke-dasharray="6.5 4 6.5 0"/><path d="M8.5,4V13M4,8.5H13" stroke="#e4e9ff" stroke-width="1"/></svg><div class="t" style="left:849.8px;top:493.6px;font-size:12px;font-weight:bold;color:#e8e8e8;margin-top:-0.6px">Point 3 - 1</div>
<svg class="a" style="left:809px;top:516px" width="8" height="10"><path d="M0.5,0.8L6.5,5L0.5,9.2Z" fill="#676767"/></svg><svg class="a" style="left:822px;top:512px" width="18" height="18"><rect x="0.5" y="0.5" width="17" height="17" fill="#3a4584" stroke="#b4c2f4" stroke-width="1" stroke-dasharray="6.5 4 6.5 0"/><path d="M8.5,4V13M4,8.5H13" stroke="#e4e9ff" stroke-width="1"/></svg><div class="t" style="left:849.8px;top:515.6px;font-size:12px;font-weight:bold;color:#e8e8e8;margin-top:-0.6px">Point 4 - 1</div>
<svg class="a" style="left:809px;top:538px" width="8" height="10"><path d="M0.5,0.8L6.5,5L0.5,9.2Z" fill="#676767"/></svg><svg class="a" style="left:822px;top:534px" width="18" height="18"><rect x="0.5" y="0.5" width="17" height="17" fill="#3a4584" stroke="#b4c2f4" stroke-width="1" stroke-dasharray="6.5 4 6.5 0"/><path d="M8.5,4V13M4,8.5H13" stroke="#e4e9ff" stroke-width="1"/></svg><div class="t" style="left:849.8px;top:537.6px;font-size:12px;font-weight:bold;color:#e8e8e8;margin-top:-0.6px">Point 1 - 2</div>
<svg class="a" style="left:809px;top:560px" width="8" height="10"><path d="M0.5,0.8L6.5,5L0.5,9.2Z" fill="#676767"/></svg><svg class="a" style="left:822px;top:556px" width="18" height="18"><rect x="0.5" y="0.5" width="17" height="17" fill="#3a4584" stroke="#b4c2f4" stroke-width="1" stroke-dasharray="6.5 4 6.5 0"/><path d="M8.5,4V13M4,8.5H13" stroke="#e4e9ff" stroke-width="1"/></svg><div class="t" style="left:849.8px;top:559.6px;font-size:12px;font-weight:bold;color:#e8e8e8;margin-top:-0.6px">Point 2 - 2</div>
<svg class="a" style="left:809px;top:582px" width="8" height="10"><path d="M0.5,0.8L6.5,5L0.5,9.2Z" fill="#676767"/></svg><svg class="a" style="left:822px;top:578px" width="18" height="18"><rect x="0.5" y="0.5" width="17" height="17" fill="#3a4584" stroke="#b4c2f4" stroke-width="1" stroke-dasharray="6.5 4 6.5 0"/><path d="M8.5,4V13M4,8.5H13" stroke="#e4e9ff" stroke-width="1"/></svg><div class="t" style="left:849.8px;top:581.6px;font-size:12px;font-weight:bold;color:#e8e8e8;margin-top:-0.6px">Point 3 - 2</div>
<svg class="a" style="left:809px;top:604px" width="8" height="10"><path d="M0.5,0.8L6.5,5L0.5,9.2Z" fill="#676767"/></svg><svg class="a" style="left:822px;top:600px" width="18" height="18"><rect x="0.5" y="0.5" width="17" height="17" fill="#3a4584" stroke="#b4c2f4" stroke-width="1" stroke-dasharray="6.5 4 6.5 0"/><path d="M8.5,4V13M4,8.5H13" stroke="#e4e9ff" stroke-width="1"/></svg><div class="t" style="left:849.8px;top:603.6px;font-size:12px;font-weight:bold;color:#e8e8e8;margin-top:-0.6px">Point 4 - 2</div>
<svg class="a" style="left:809px;top:626px" width="8" height="10"><path d="M0.5,0.8L6.5,5L0.5,9.2Z" fill="#676767"/></svg><svg class="a" style="left:822px;top:622px" width="18" height="18"><rect x="0.5" y="0.5" width="17" height="17" fill="#3a4584" stroke="#b4c2f4" stroke-width="1" stroke-dasharray="6.5 4 6.5 0"/><path d="M8.5,4V13M4,8.5H13" stroke="#e4e9ff" stroke-width="1"/></svg><div class="t" style="left:849.8px;top:625.6px;font-size:12px;font-weight:bold;color:#e8e8e8;margin-top:-0.6px">Point 1 - 3</div>
<div class="t" style="left:1213.4px;top:559.6px;font-size:11.4px;color:#e6e6e6">33.3333 %</div><div class="t" style="left:1455.5px;top:559.6px;font-size:11.4px;color:#e6e6e6">33.3333 %</div><div class="sp" style="left:1436px;top:558px"></div><div class="sp" style="left:1678px;top:558px"></div>
<div class="t" style="left:1213.4px;top:581.6px;font-size:11.4px;color:#e6e6e6">60.9119 %</div><div class="t" style="left:1455.5px;top:581.6px;font-size:11.4px;color:#e6e6e6">37.7179 %</div><div class="sp" style="left:1436px;top:580px"></div><div class="sp" style="left:1678px;top:580px"></div>
<div class="t" style="left:1213.4px;top:603.6px;font-size:11.4px;color:#e6e6e6">100 %</div><div class="t" style="left:1455.5px;top:603.6px;font-size:11.4px;color:#e6e6e6">33.3333 %</div><div class="sp" style="left:1436px;top:602px"></div><div class="sp" style="left:1678px;top:602px"></div>
<div class="t" style="left:1213.4px;top:625.6px;font-size:11.4px;color:#e6e6e6">0 %</div><div class="t" style="left:1455.5px;top:625.6px;font-size:11.4px;color:#e6e6e6">66.6667 %</div><div class="sp" style="left:1436px;top:624px"></div><div class="sp" style="left:1678px;top:624px"></div>


<!-- dropdown -->
<div class="a" style="left:1208px;top:356px;width:481px;height:21px;background:#171717;border:1px solid #0f6470"></div>
<div class="t" style="left:1214.3px;top:361.8px;font-size:10.6px;color:#f0f0f0">Bezier Patch</div>
<div class="a" style="left:1672px;top:357px;width:17px;height:20px;background:linear-gradient(#d8d8d8,#9a9a9a)"></div>
<svg class="a" style="left:1676px;top:360px" width="10" height="14"><path d="M1.5,6L5,2L8.5,6Z M1.5,8L5,12L8.5,8Z" fill="#3a3a3a"/></svg>
<div class="a" style="left:1208px;top:377px;width:482px;height:181px;background:#454545"></div>
<div class="t" style="left:1234.5px;top:385.5px;font-size:12.6px;letter-spacing:0.2px;color:#f2f2f2">Bezier</div>
<div class="t" style="left:1234.5px;top:407.5px;font-size:12.6px;letter-spacing:0.2px;color:#f2f2f2">Bezier Patch</div>
<div class="t" style="left:1234.5px;top:429.5px;font-size:12.6px;letter-spacing:0.2px;color:#f2f2f2">Bilinear</div>
<div class="t" style="left:1234.5px;top:451.5px;font-size:12.6px;letter-spacing:0.2px;color:#f2f2f2">Fit</div>
<div class="t" style="left:1234.5px;top:473.5px;font-size:12.6px;letter-spacing:0.2px;color:#f2f2f2">Parametric</div>
<div class="t" style="left:1234.5px;top:495.5px;font-size:12.6px;letter-spacing:0.2px;color:#f2f2f2">Perspective</div>
<div class="t" style="left:1234.5px;top:517.5px;font-size:12.6px;letter-spacing:0.2px;color:#f2f2f2">Perspective Interpolation</div>
<div class="t" style="left:1234.5px;top:539.5px;font-size:12.6px;letter-spacing:0.2px;color:#f2f2f2">Perspective Remapping</div>
<svg class="a" style="left:1215px;top:405px" width="14" height="15"><path d="M2,8.5L5.5,13.5L12,1.5" stroke="#f4f4f4" stroke-width="2.2" fill="none"/></svg>
<div class="a" style="left:1179px;top:347px;width:360px;height:212px;border:1px solid #e01010"></div>

<div class="a" style="left:848px;top:167px;width:91px;height:2px;background:#ff0000"></div>
<div class="a" style="left:902px;top:164px;width:2px;height:88px;background:#ff0000"></div>
<svg class="a" style="left:893px;top:240px" width="20" height="15"><path d="M3.5,3L10,13L16.5,3" stroke="#ff0000" stroke-width="2.2" fill="none"/></svg>
</body></html>
